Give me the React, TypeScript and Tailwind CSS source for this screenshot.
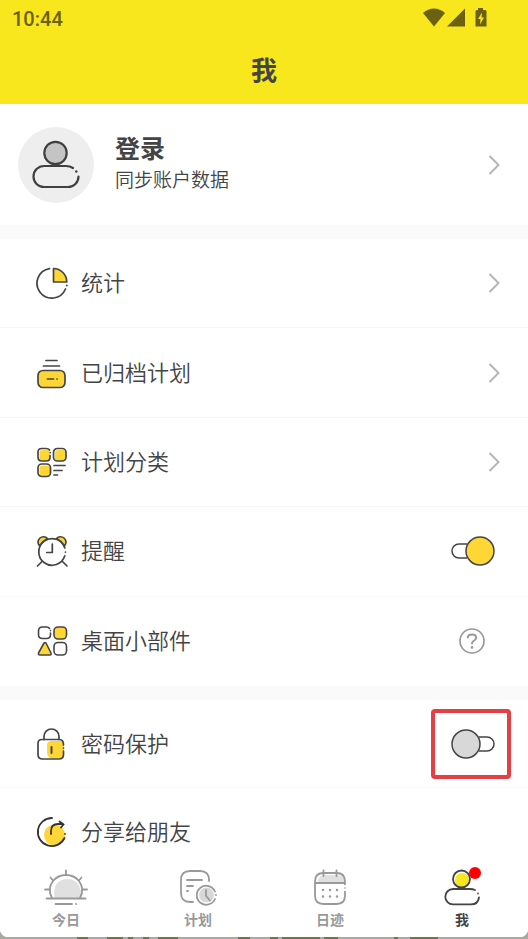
import type { ReactNode } from "react";

const ChevronIcon = () => (
  <svg width="12" height="20" viewBox="0 0 12 20" fill="none" stroke="#b5b5b5" strokeWidth="2" aria-hidden="true">
    <path d="M1.500 1 10.500 10 1.500 19" />
  </svg>
);

const WifiIcon = () => (
  <svg width="22" height="20" viewBox="0 0 22 20" fill="#6b6110" aria-hidden="true">
    <path d="M11 18.500 0 5 Q5 .5 11 .5 T22 5Z" />
  </svg>
);

const SignalIcon = () => (
  <svg width="18" height="20" viewBox="0 0 18 20" fill="#6b6110" aria-hidden="true">
    <path d="M0 18.500 18 .5V18.500Z" />
  </svg>
);

const BatteryIcon = () => (
  <svg width="12" height="20" viewBox="0 0 12 20" aria-hidden="true">
    <path d="M3 0h5v2h2.500l1 1v15.500h-11V3l1-1H3Z" fill="#6b6110" />
    <path d="M7 4.500 3 11h2.500L5 16.500l4-7H6.500Z" fill="#f8e71c" />
  </svg>
);

const AvatarIcon = () => (
  <svg width="48" height="50" viewBox="0 0 48 50" fill="none" stroke="#404042" strokeWidth="2.200" strokeLinecap="round" aria-hidden="true">
    <circle cx="23.500" cy="13" r="11.200" fill="#c4c4c4" />
    <path d="M41 28Q38 26 34 26H12a10.500 10.500 0 0 0 0 21H36a10.500 10.500 0 0 0 10.500-10.500" />
    <path d="M44.300 31.500v.1" strokeWidth="2.500" />
  </svg>
);

const StatsIcon = () => (
  <svg width="32" height="32" viewBox="0 0 32 32" fill="none" stroke="#454548" strokeWidth="1.700" strokeLinecap="round" aria-hidden="true">
    <path d="M17.500 1.500v13.500h13.300a13.500 13.500 0 0 0-13.300-13.500Z" fill="#ffd735" strokeLinejoin="round" />
    <path d="M13.500 1.700A14.800 14.800 0 1 0 29.500 22" />
    <path d="M30.800 18.500v.1" strokeWidth="2" />
  </svg>
);

const ArchiveIcon = () => (
  <svg width="32" height="32" viewBox="0 0 32 32" fill="none" stroke="#454548" strokeWidth="1.700" strokeLinecap="round" aria-hidden="true">
    <path d="M10 3.500h11M7.500 9h16" />
    <rect x="2" y="13.500" width="27" height="17" rx="5" fill="#ffd735" />
    <path d="M11.500 22h6M21 22h.1" />
  </svg>
);

const CategoryIcon = () => (
  <svg width="32" height="32" viewBox="0 0 32 32" fill="none" stroke="#454548" strokeWidth="1.700" strokeLinecap="round" aria-hidden="true">
    <g fill="#ffd735" stroke="none">
      <rect x="3.500" y="4" width="10.500" height="11" rx="3" />
      <rect x="19" y="4" width="10.500" height="11" rx="3" />
      <rect x="3.500" y="19.500" width="10.500" height="11" rx="3" />
    </g>
    <path d="M13.500 4Q12.500 2.500 10 2.500H6Q2 2.500 2 6v5q0 4 4 4h4.500q3.500 0 3.500-4V9.500M14.300 6.500v.1" />
    <rect x="17.500" y="2.500" width="12.500" height="12.500" rx="3.800" />
    <rect x="2" y="18" width="12.500" height="12.500" rx="3.800" />
    <path d="M18 19.500h11M18 24.500h8M18 29h3.500" />
  </svg>
);

const AlarmIcon = () => (
  <svg width="32" height="32" viewBox="0 0 32 32" fill="none" stroke="#454548" strokeWidth="1.700" strokeLinecap="round" aria-hidden="true">
    <path d="M3.500 11A5.400 5.400 0 1 1 11.500 3.500Q6.500 6 3.500 11ZM20.500 3.500a5.400 5.400 0 1 1 8 7.500Q25.500 6 20.500 3.500Z" fill="#ffd735" />
    <path d="M28.800 13A13.300 13.300 0 1 0 28.800 20.800M29.500 17v.1" />
    <path d="M16.300 9V17.500h-5.500M6 26.500 1.500 31M26.500 26.500 31 31" />
  </svg>
);

const WidgetIcon = () => (
  <svg width="32" height="32" viewBox="0 0 32 32" fill="none" stroke="#454548" strokeWidth="1.600" strokeLinecap="round" strokeLinejoin="round" aria-hidden="true">
    <path d="M13.500 3.500Q12.500 2 10.500 2H6.500Q2.500 2 2.500 6v3.500q0 4 4 4h4q4 0 4-4V8M14.500 5.500v.1" />
    <rect x="18" y="2" width="12.500" height="12" rx="4" fill="#ffd735" />
    <path d="M8 18 2.500 28Q2 30 4 30h10Q15.500 30 15 28L10 18q-1-1-2 0Z" fill="#ffd735" />
    <rect x="18" y="17.500" width="12.500" height="12.500" rx="4" />
  </svg>
);

const LockIcon = () => (
  <svg width="32" height="34" viewBox="0 0 32 34" fill="none" stroke="#454548" strokeWidth="1.700" strokeLinecap="round" aria-hidden="true">
    <path d="M11 16.500Q12 14 15 14h10q3 0 3 3v11q0 3.500-3.500 3.500H15q-4-1.500-4-7Z" fill="#ffd735" stroke="none" />
    <path d="M8 12.500V9.500a7.500 7.500 0 0 1 15 0v3" />
    <path d="M27.500 18q0-5.500-4-5.500H6q-4 0-4 4v11q0 4.500 4.500 4.500H23q4.500 0 4.500-4.500V24M27.500 21v.1" />
    <path d="M15.500 20v6" strokeWidth="2" />
  </svg>
);

const ShareIcon = () => (
  <svg width="32" height="32" viewBox="0 0 32 32" fill="none" stroke="#333336" strokeWidth="1.800" strokeLinecap="round" aria-hidden="true">
    <circle cx="18.500" cy="19" r="10.500" fill="#ffd735" stroke="none" />
    <path d="M16 2A14 14 0 1 0 28.500 22M29 17.800v.1" />
    <path d="M15 18v-3q0-7 7-7h5M23.500 5.500 27.500 8.500 25 11.500" />
  </svg>
);

const HelpIcon = () => (
  <svg width="26" height="26" viewBox="0 0 26 26" fill="none" stroke="#999" strokeWidth="1.700" strokeLinecap="round" aria-hidden="true">
    <circle cx="13" cy="13" r="12" />
    <path d="M8.800 9.500Q9 6.500 13 6.500t4.200 3.300Q17.200 11.500 14.500 13 13 14 13 15.500" strokeWidth="2" />
    <path d="M13 19.300v.1" strokeWidth="2.500" />
  </svg>
);

const TodayIcon = () => (
  <svg width="44" height="38" viewBox="0 0 44 38" fill="none" stroke="#999" strokeWidth="1.800" strokeLinecap="round" aria-hidden="true">
    <path d="M10.500 29Q8 11 23 10q15 0 14 19Z" fill="#e0e0e0" stroke="none" />
    <path d="M8 29Q3 20 9 12q5-6 13-6t13 6q6 8 1 17M2.500 29.500h39" />
    <path d="M22 1.500V6M6.500 8.500 9 11.500M37.500 8.500 35 11.500M1 20.500h5M38 20.500h5M11.500 35H28M32 35h.1" />
  </svg>
);

const PlanIcon = () => (
  <svg width="38" height="38" viewBox="0 0 38 38" fill="none" stroke="#999" strokeWidth="1.800" strokeLinecap="round" aria-hidden="true">
    <path d="M30 12V11Q30 2 21 2H11Q2 2 2 11v13q0 9 9 9h3" />
    <path d="M8 11h15M8 17h6M8 22h1" />
    <circle cx="27.500" cy="26" r="7.500" fill="#d8d8d8" stroke="none" />
    <path d="M36 22.500a9.500 9.500 0 1 0 0 7.500M37 26v.1M27 21V27l4 4.500" />
  </svg>
);

const JournalIcon = () => (
  <svg width="34" height="38" viewBox="0 0 34 38" fill="none" stroke="#999" strokeWidth="1.800" aria-hidden="true">
    <path d="M5 13Q5 6 12 6h12q7 0 7 7Z" fill="#e0e0e0" stroke="none" />
    <path d="M32 16v-3.500Q32 4 23.500 4h-13Q2 4 2 12.500v14q0 8.500 8.500 8.500h13Q32 35 32 26.500V22M2 14h30M32 18.500v1" />
    <path d="M10.500 1.500v5.500M23.500 1.500v5.500" strokeLinecap="round" />
    <path d="M10 21v.1M17 21v.1M24 21v.1M10 27.500v.1M17 27.500v.1M24 27.500v.1" strokeWidth="2.500" strokeLinecap="round" />
  </svg>
);

const MeIcon = () => (
  <svg width="38" height="38" viewBox="0 0 38 38" fill="none" stroke="#444" strokeWidth="1.800" strokeLinecap="round" aria-hidden="true">
    <circle cx="19" cy="11" r="7" fill="#f8e71c" stroke="none" />
    <circle cx="18.500" cy="10" r="8.500" />
    <path d="M32 21Q30 20 27 20H10a7.700 7.700 0 0 0 0 15.400h18Q35 35.400 36 28.500M35 24.500v.1" />
  </svg>
);

const Toggle = ({ id, on }: { id: string; on?: boolean }) => (
  <label htmlFor={id} className="relative block cursor-pointer">
    <input id={id} type="checkbox" defaultChecked={on} className="peer absolute inset-0 h-full w-full cursor-pointer appearance-none" />
    {/* off */}
    <svg className="block peer-checked:hidden" width="44" height="30" viewBox="0 0 44 30" fill="none" stroke="#444" strokeWidth="1.500" aria-hidden="true">
      <path d="M28 8h8a7 7 0 0 1 0 14h-8" />
      <circle cx="15" cy="15" r="14" fill="#d8d8d8" />
    </svg>
    {/* on */}
    <svg className="hidden peer-checked:block" width="44" height="30" viewBox="0 0 44 30" fill="none" stroke="#444" strokeWidth="1.500" aria-hidden="true">
      <path d="M16 8H8a7 7 0 0 0 0 14h8" />
      <circle cx="29" cy="15" r="14" fill="#ffd735" />
    </svg>
  </label>
);

const rowClass = "flex min-h-[88px] w-full items-center gap-[13px] border-b border-[#f6f6f6] pl-9 text-left last:border-b-0";
const labelClass = "flex-1 pt-[2px]";

const LinkRow = ({ icon, label }: { icon: ReactNode; label: string }) => (
  <a href="#" className={`${rowClass} pr-7`}>
    {icon}
    <span className={labelClass}>{label}</span>
    <ChevronIcon />
  </a>
);

const TABS = [
  { label: "今日", icon: <TodayIcon /> },
  { label: "计划", icon: <PlanIcon /> },
  { label: "日迹", icon: <JournalIcon /> },
  { label: "我", icon: <MeIcon />, active: true },
];

const GRASS = [
  [77, 11],
  [107, 16],
  [128, 5],
  [143, 6],
  [158, 20],
  [238, 12],
  [270, 8],
  [282, 38],
  [324, 14],
  [394, 4],
  [410, 28],
];

export default function App() {
  return (
    <div className="relative h-screen overflow-hidden bg-[#a9aa9f] pb-[2px] font-['Roboto','Noto_Sans_CJK_SC',sans-serif] text-[#444]">
      <svg className="absolute bottom-0 left-0 h-[2px] w-full" viewBox="0 0 528 2" preserveAspectRatio="none" fill="#6d7848" aria-hidden="true">
        {GRASS.map(([x, w]) => (
          <rect key={x} x={x} y="0" width={w} height="2" />
        ))}
      </svg>
      <div className="relative flex h-full flex-col overflow-hidden rounded-b-lg bg-white">
        <header className="shrink-0 bg-[#f8e71c]">
          <div className="flex h-9 items-center justify-between pr-[41px] pl-3 text-[#6b6110]">
            <time className="pt-px text-xl font-medium">10:44</time>
            <div className="flex items-center gap-[2px]">
              <WifiIcon />
              <SignalIcon />
              <span className="pl-2">
                <BatteryIcon />
              </span>
            </div>
          </div>
          <h1 className="flex h-[68px] items-center justify-center pt-[3px] text-[26px] font-bold">我</h1>
        </header>

        <main className="flex min-h-0 flex-1 flex-col gap-[14px] overflow-hidden bg-[#fafafa] text-[22px] leading-8 font-[350]">
          <a href="#" className="flex h-[121px] shrink-0 items-center bg-white pr-7 pl-[18px]">
            <span className="flex size-[76px] items-center justify-center rounded-full bg-[#eee]">
              <AvatarIcon />
            </span>
            <span className="flex flex-1 flex-col pt-px pl-[21px]">
              <strong className="text-[25px] leading-8 font-bold">登录</strong>
              <span className="text-[19px] leading-[30px]">同步账户数据</span>
            </span>
            <ChevronIcon />
          </a>

          <section className="grid min-h-[447px] shrink-0 grid-rows-5 bg-white">
            <LinkRow icon={<StatsIcon />} label="统计" />
            <LinkRow icon={<ArchiveIcon />} label="已归档计划" />
            <LinkRow icon={<CategoryIcon />} label="计划分类" />
            <div className={`${rowClass} pr-[33px]`}>
              <AlarmIcon />
              <label htmlFor="reminder" className={labelClass}>提醒</label>
              <Toggle id="reminder" on />
            </div>
            <div className={`${rowClass} pr-[43px]`}>
              <WidgetIcon />
              <span className={labelClass}>桌面小部件</span>
              <button type="button" aria-label="桌面小部件">
                <HelpIcon />
              </button>
            </div>
          </section>

          <section className="flex-1 bg-white">
            <div className={`${rowClass} pr-[33px]`}>
              <LockIcon />
              <label htmlFor="passcode" className={labelClass}>密码保护</label>
              <div className="relative">
                <Toggle id="passcode" />
                <span className="pointer-events-none absolute -inset-y-5 -right-4 -left-5 rounded border-4 border-[#e53e43]" />
              </div>
            </div>
            <button type="button" className={rowClass}>
              <ShareIcon />
              <span className={labelClass}>分享给朋友</span>
            </button>
          </section>
        </main>

        <nav className="grid h-[74px] shrink-0 grid-cols-4 bg-white">
          {TABS.map((tab) => (
            <a
              key={tab.label}
              href="#"
              aria-current={tab.active ? "page" : undefined}
              className={`flex flex-col items-center pt-[6px] text-sm leading-6 font-bold ${tab.active ? "text-[#444]" : "text-[#999]"}`}
            >
              <span className="relative">
                {tab.icon}
                {tab.active && <span className="absolute -top-[2px] right-0 size-3 rounded-full bg-[#f00]" />}
              </span>
              <span className="pt-px">{tab.label}</span>
            </a>
          ))}
        </nav>
      </div>
    </div>
  );
}
